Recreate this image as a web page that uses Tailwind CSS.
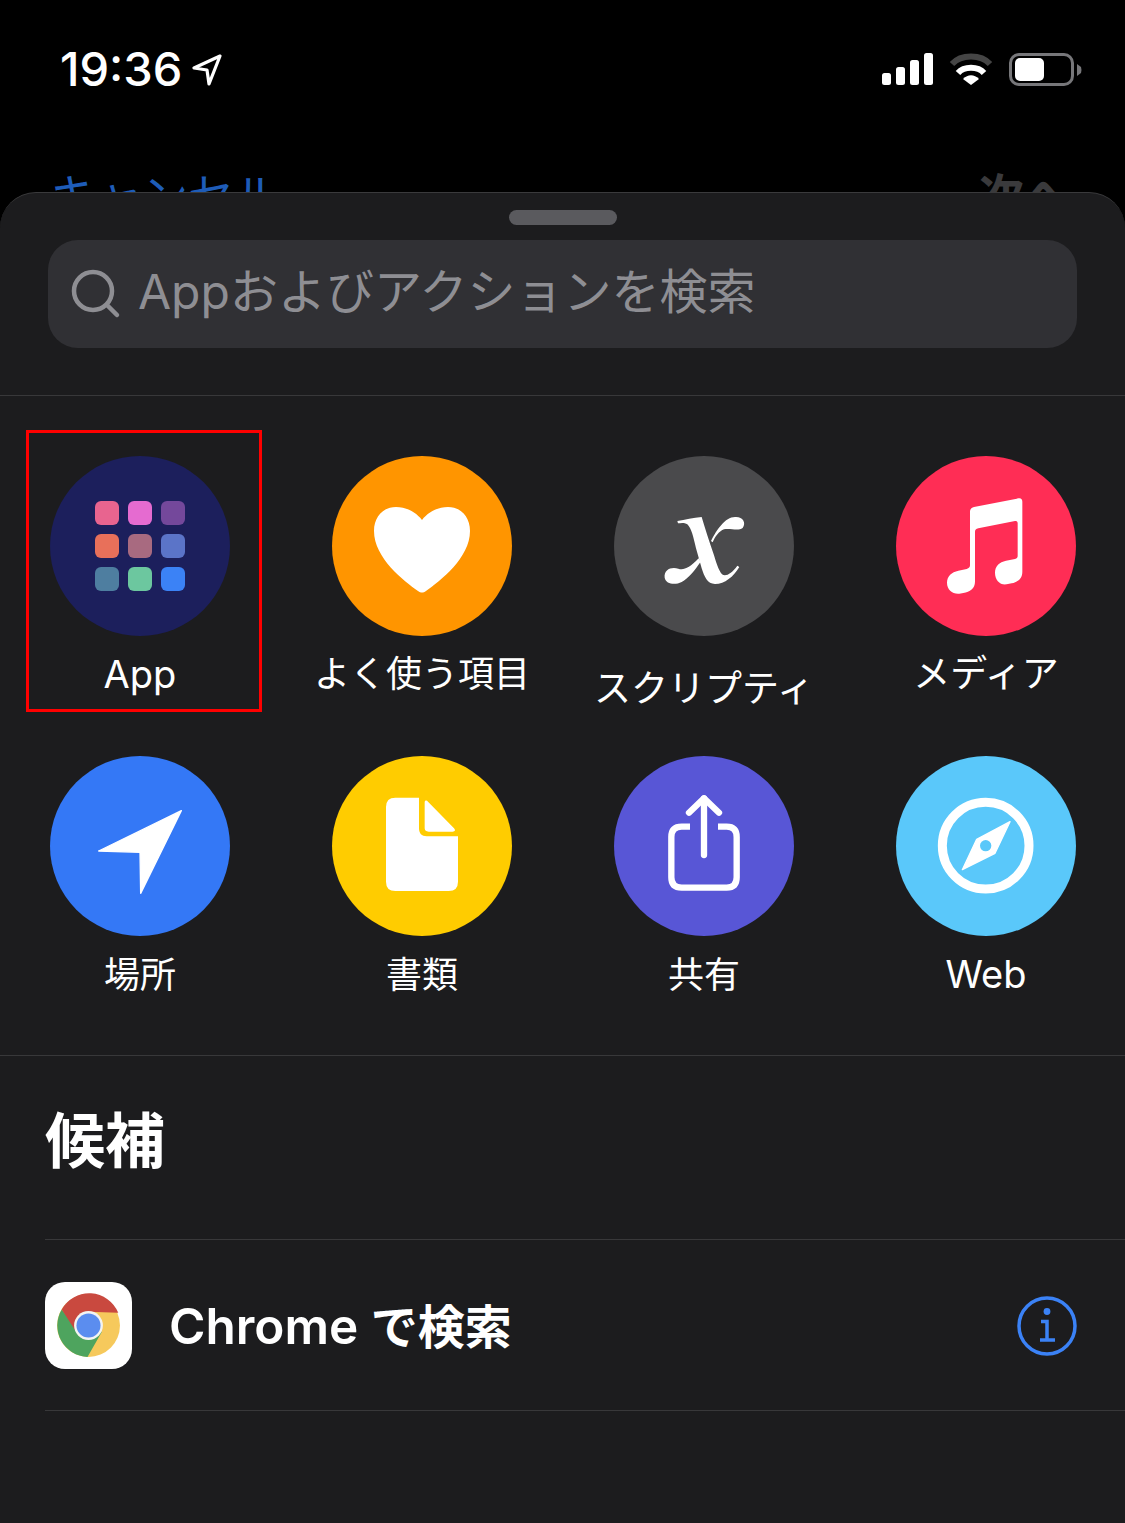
<!DOCTYPE html>
<html lang="ja">
<head>
    <meta charset="UTF-8">
    <meta name="viewport" content="width=device-width, initial-scale=1.0">
    <script src="https://cdn.jsdelivr.net/npm/@tailwindcss/browser@4"></script>
    <title>アクションを追加</title>
</head>
<body class="bg-black w-[1125px] h-[1523px] overflow-hidden text-white font-['Inter','Noto_Sans_CJK_JP',sans-serif]">

    <!-- Status bar + nav hidden behind the sheet -->
    <header class="h-[192px] overflow-hidden">
        <div class="h-[136px] flex justify-between pl-[60px] pr-[43px] pt-[44px]">
            <div class="flex items-start">
                <span class="text-[47px] leading-[50px] font-medium">19:36</span>
                <svg class="ml-[9px] mt-[9px]" width="32" height="34" viewBox="0 0 32 34" fill="none" stroke="#fff" stroke-width="3.2" stroke-linejoin="round"><path d="M29 3 L3 15 L16 17 L18 31 Z"/></svg>
            </div>
            <div class="flex items-start">
                <svg class="mt-[9px]" width="52" height="33" viewBox="0 0 52 33" fill="#fff"><rect x="0" y="20" width="9" height="12" rx="2.5"/><rect x="14" y="14" width="9" height="18" rx="2.5"/><rect x="28" y="7" width="9" height="25" rx="2.5"/><rect x="42" y="0" width="9" height="32" rx="2.5"/></svg>
                <svg class="ml-[15px] mt-[9px]" width="44" height="33" viewBox="0 0 44 33" fill="none" stroke-width="6"><path d="M3 11 C12 1 32 1 41 11" stroke="#454545"/><path d="M9 20 C15 13 29 13 35 20" stroke="#fff"/><path d="M22 32 L14 26 C19 21 25 21 30 26 Z" fill="#fff" stroke="none"/></svg>
                <div class="ml-[16px] mt-[9px] flex items-center">
                    <div class="w-[65px] h-[33px] rounded-[10px] border-[3px] border-[#77777a] pl-[3px] pt-[2px]">
                        <div class="w-[29px] h-[23px] rounded-[5px] bg-white"></div>
                    </div>
                    <svg class="ml-[3px]" width="5" height="12" viewBox="0 0 5 12" fill="#77777a"><path d="M0 0 L4 3 Q5 6 4 9 L0 12 Z"/></svg>
                </div>
            </div>
        </div>
        <div class="flex justify-between pl-[50px] pr-[55px] text-[46px] leading-[56px] mt-[31px]">
            <span class="text-[#1e5cb8]">キャンセル</span>
            <span class="text-[#3a3a3c] font-bold">次へ</span>
        </div>
    </header>

    <!-- Sheet -->
    <main class="h-[1331px] bg-[#1c1c1e] rounded-t-[36px] border-t border-[#3a3a3c] flex flex-col">
        <div class="mt-[17px] mx-auto w-[108px] h-[15px] rounded-full bg-[#5a5a5e]"></div>

        <div class="mt-[15px] mx-[48px] h-[108px] rounded-[30px] bg-[#303034] flex items-center pl-[23px]">
            <svg width="50" height="50" viewBox="0 0 50 50" fill="none" stroke="#8e8e93" stroke-width="4.5" stroke-linecap="round"><circle cx="22" cy="22" r="19"/><path d="M36 36 L46 46"/></svg>
            <span class="ml-[17px] mb-[5px] text-[48px] leading-none text-[#8e8e93]">Appおよびアクションを検索</span>
        </div>

        <!-- Categories -->
        <section class="mt-[47px] border-t border-[#38383a] h-[661px] pt-[60px] pl-[50px] grid grid-cols-[180px_180px_180px_180px] auto-rows-[300px] gap-x-[102px] border-b">

            <div class="relative flex flex-col items-center">
                <div class="w-[180px] h-[180px] rounded-full bg-[#1c1f5c] flex items-center justify-center">
                    <div class="grid grid-cols-3 gap-[9px]">
                        <div class="w-[24px] h-[24px] rounded-[6px] bg-[#e8648f]"></div>
                        <div class="w-[24px] h-[24px] rounded-[6px] bg-[#e56bd0]"></div>
                        <div class="w-[24px] h-[24px] rounded-[6px] bg-[#74489b]"></div>
                        <div class="w-[24px] h-[24px] rounded-[6px] bg-[#e8705a]"></div>
                        <div class="w-[24px] h-[24px] rounded-[6px] bg-[#a86a80]"></div>
                        <div class="w-[24px] h-[24px] rounded-[6px] bg-[#5b74c8]"></div>
                        <div class="w-[24px] h-[24px] rounded-[6px] bg-[#4e7ea0]"></div>
                        <div class="w-[24px] h-[24px] rounded-[6px] bg-[#6cc79f]"></div>
                        <div class="w-[24px] h-[24px] rounded-[6px] bg-[#3b82f6]"></div>
                    </div>
                </div>
                <span class="mt-[16px] text-[38px] leading-[44px] whitespace-nowrap">App</span>
                <div class="absolute left-[-24px] top-[-26px] w-[236px] h-[282px] border-[3px] border-[#ff0000]"></div>
            </div>

            <div class="flex flex-col items-center">
                <svg class="rounded-full bg-[#ff9500]" width="180" height="180" viewBox="0 0 180 180" fill="#fff"><path d="M90 64 C84 56 74 51 64 51 C51 51 42 61 42 75 C42 102 72 125 86 135 C89 137 91 137 94 135 C108 125 138 102 138 75 C138 61 129 51 116 51 C106 51 96 56 90 64 Z"/></svg>
                <span class="mt-[16px] text-[36px] leading-[44px] whitespace-nowrap">よく使う項目</span>
            </div>

            <div class="flex flex-col items-center">
                <svg class="rounded-full bg-[#4a4a4c]" width="180" height="180" viewBox="-108 -147 540 540" fill="#fff">
                    <path d="M82 48 C105 44 130 38 155 36 C165 70 178 110 190 145 C198 170 205 195 216 208 C228 216 245 205 262 182 L268 186 C250 215 225 237 195 237 C172 237 163 215 155 190 L138 130 C130 95 124 70 112 58 C103 52 92 54 84 55 Z"/>
                    <path d="M183 108 C200 75 225 36 255 36 C277 34 290 52 278 69 C263 80 240 68 222 73 C208 78 195 95 188 112 Z"/>
                    <path d="M146 160 L152 170 C135 195 115 220 95 231 C75 241 48 238 44 218 C41 193 65 184 85 191 C100 196 118 190 146 160 Z"/>
                </svg>
                <span class="mt-[31px] text-[37px] leading-[44px] whitespace-nowrap">スクリプティ</span>
            </div>

            <div class="flex flex-col items-center">
                <svg class="rounded-full bg-[#ff2d55]" width="180" height="180" viewBox="918 48 540 540" fill="#fff"><path d="M1140 215 C1140 207 1145 203 1152 201 L1285 175 C1293 173 1297 178 1297 185 L1297 395 C1297 415 1285 425 1265 430 L1250 433 C1230 436 1215 420 1215 398 C1215 378 1228 366 1248 362 L1275 357 C1281 355 1283 352 1283 347 L1283 250 C1283 244 1280 242 1275 243 L1165 265 C1158 266 1155 270 1155 276 L1155 425 C1155 445 1140 455 1120 459 L1108 461 C1088 463 1071 450 1071 428 C1071 408 1085 396 1105 392 L1130 387 C1137 385 1140 382 1140 376 Z"/></svg>
                <span class="mt-[16px] text-[37px] leading-[44px] whitespace-nowrap">メディア</span>
            </div>

            <div class="flex flex-col items-center">
                <svg class="rounded-full bg-[#3478f6]" width="180" height="180" viewBox="60 33 540 540" fill="#fff" stroke="#fff" stroke-width="4" stroke-linejoin="round"><path d="M454 197 L206 318 L330 322 L332 445 Z"/></svg>
                <span class="mt-[17px] text-[36px] leading-[44px] whitespace-nowrap">場所</span>
            </div>

            <div class="flex flex-col items-center">
                <svg class="rounded-full bg-[#ffcc00]" width="180" height="180" viewBox="906 33 540 540" fill="#fff"><path d="M1096 158 L1167 158 L1167 250 C1167 265 1175 274 1190 274 L1284 274 L1284 410 Q1284 438 1256 438 L1096 438 Q1068 438 1068 410 L1068 186 Q1068 158 1096 158 Z"/><path d="M1184 172 C1184 166 1190 165 1194 170 L1272 250 C1277 256 1275 260 1268 260 L1196 260 C1188 260 1184 256 1184 250 Z"/></svg>
                <span class="mt-[17px] text-[36px] leading-[44px] whitespace-nowrap">書類</span>
            </div>

            <div class="flex flex-col items-center">
                <svg class="rounded-full bg-[#5856d6]" width="180" height="180" viewBox="42 33 540 540" fill="none" stroke="#fff" stroke-width="19" stroke-linecap="round" stroke-linejoin="round"><path d="M270 245 L245 245 Q214 245 214 276 L214 397 Q214 428 245 428 L380 428 Q410 428 410 397 L410 276 Q410 245 380 245 L354 245" stroke-linecap="butt"/><path d="M312 160 L312 330"/><path d="M267 203 L312 160 L357 203"/></svg>
                <span class="mt-[17px] text-[36px] leading-[44px] whitespace-nowrap">共有</span>
            </div>

            <div class="flex flex-col items-center">
                <svg class="rounded-full bg-[#5ac8fa]" width="180" height="180" viewBox="888 33 540 540"><circle cx="1157" cy="302" r="130" fill="none" stroke="#fff" stroke-width="27"/><path fill="#fff" stroke="#fff" stroke-width="4" stroke-linejoin="round" d="M1230 230 L1130 283 L1087 374 L1185 325 Z"/><circle cx="1157" cy="302" r="17" fill="#5ac8fa"/></svg>
                <span class="mt-[16px] text-[38px] leading-[44px] whitespace-nowrap">Web</span>
            </div>
        </section>

        <!-- Suggestions -->
        <section class="h-[183px] pl-[45px] pt-[45px]">
            <h2 class="text-[60px] leading-[80px] font-bold">候補</h2>
        </section>

        <div class="ml-[45px] h-[172px] border-y border-[#38383a] flex items-center pr-[48px]">
            <div class="w-[87px] h-[87px] rounded-[20px] bg-white">
                <svg width="87" height="87" viewBox="45 36 260 260">
                    <circle cx="175" cy="166" r="94" fill="#f6c95c"/>
                    <path fill="#4ea45e" d="M95 118 A94 94 0 0 0 172 260 L215 185 L135 170 Z"/>
                    <path fill="#c9493f" d="M95 118 A94 94 0 0 1 264 128 L175 125 L135 180 Z"/>
                    <circle cx="175" cy="166" r="43" fill="#f4f4f2"/>
                    <circle cx="175" cy="166" r="36" fill="#5b8def"/>
                </svg>
            </div>
            <span class="ml-[37px] mt-[3px] text-[49.5px] leading-none font-semibold">Chrome <span class="text-[47px]">で検索</span></span>
            <svg class="ml-auto mt-[2px]" width="60" height="60" viewBox="0 0 60 60" fill="none" stroke="#3b82f6"><circle cx="30" cy="30" r="28" stroke-width="3.5"/><circle cx="30" cy="15.5" r="3.4" fill="#3b82f6" stroke="none"/><path d="M24 25.5 H30 V44 M23 44 H38" stroke-width="3.5"/></svg>
        </div>
    </main>

</body>
</html>
